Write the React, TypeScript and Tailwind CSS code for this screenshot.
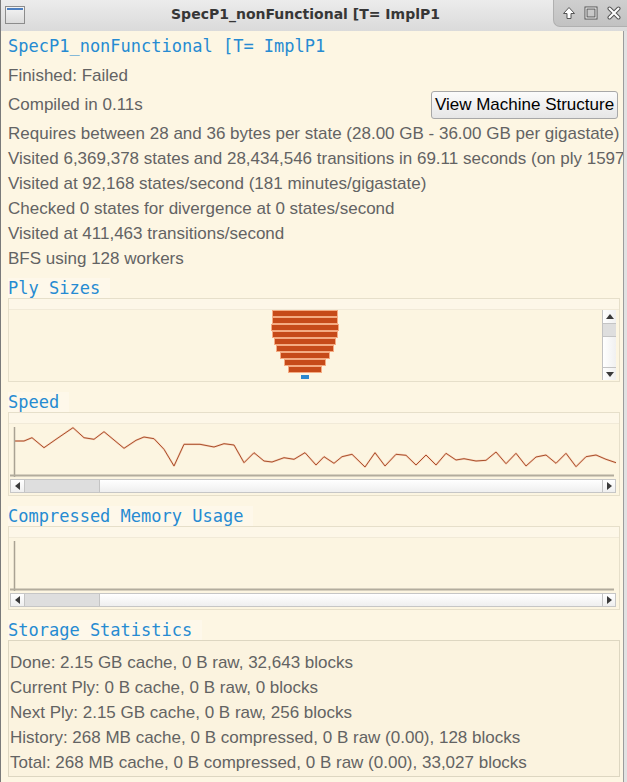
import React from "react";

const speedPts: [number, number][] = [
  [14, 440], [24, 440], [32, 436.7], [44, 446.7], [56, 438.3], [73, 426.7], [84, 436.7], [94, 438.3],
  [104, 430.7], [124, 447.3], [136, 439.3], [144, 436], [154, 437.7], [164, 448.3], [174, 465],
  [184, 443.3], [200, 443.3], [214, 446], [224, 442.7], [234, 444], [244, 461.7], [254, 451.7],
  [264, 460], [272, 461], [284, 456.7], [294, 458.3], [305, 451.7], [316, 464], [324, 455.7],
  [334, 462.3], [342, 455.7], [352, 453.3], [365, 466], [375, 451.7], [385, 465], [396, 453.3],
  [406, 454.3], [416, 464], [426, 454], [436, 464], [446, 452.3], [456, 459], [464, 457.7],
  [476, 460], [486, 459.3], [496, 451], [506, 462.7], [516, 452.3], [526, 465], [536, 456],
  [546, 454], [556, 462.3], [566, 452.3], [576, 465.7], [586, 455.7], [596, 454], [606, 458.3],
  [616, 461.7],
];

const bars: [number, number][] = [
  [273, 337], [273, 337], [272, 338], [273, 337], [275, 335], [277, 333], [281, 329], [285, 325], [289, 321],
];

function Label({ text }: { text: string }) {
  return (
    <div className="h-[20px] flex">
      <div className="h-[20px] pr-[10px] bg-[#fef8ea] text-[17px] leading-[20px] text-[#268bd2] font-['DejaVu_Sans_Mono',monospace] whitespace-nowrap">
        {text}
      </div>
    </div>
  );
}

function HScroll() {
  return (
    <div className="ml-[1px] mr-[3px] h-[14px] flex border border-[#c6c6c6] bg-gradient-to-b from-[#ffffff] to-[#efefef]">
      <div className="w-[13px] h-full flex items-center justify-center">
        <svg width="6" height="8" viewBox="0 0 6 8">
          <polygon points="5,0 5,8 0,4" fill="#3a3a3a" />
        </svg>
      </div>
      <div className="w-[76px] h-full bg-[#dedede] border-x border-[#c4c4c4]" />
      <div className="flex-1" />
      <div className="w-[13px] h-full flex items-center justify-center border-l border-[#c4c4c4]">
        <svg width="6" height="8" viewBox="0 0 6 8">
          <polygon points="1,0 1,8 6,4" fill="#3a3a3a" />
        </svg>
      </div>
    </div>
  );
}

function ChartBox({ line }: { line: boolean }) {
  const d = speedPts.map((p, i) => (i === 0 ? "M" : "L") + p[0] + " " + p[1]).join(" ");
  return (
    <div className="h-[84px] mr-[3px] border border-[#e6dfca] bg-[#fcf5e1] flex flex-col">
      <svg width="610" height="66" viewBox="9 412 610 66" className="block">
        <rect x="9" y="412" width="610" height="10" fill="#fdf7e8" />
        <line x1="9" y1="422.5" x2="619" y2="422.5" stroke="#f1ead8" strokeWidth="1" />
        {line && <path d={d} fill="none" stroke="#f0a584" strokeWidth="2" strokeOpacity="0.45" strokeLinejoin="round" />}
        {line && <path d={d} fill="none" stroke="#a9502c" strokeWidth="1" strokeLinejoin="round" />}
        <line x1="14.5" y1="426" x2="14.5" y2="476" stroke="#a9a293" strokeWidth="1.5" />
        <line x1="10" y1="474.5" x2="614" y2="474.5" stroke="#b2ac9d" strokeWidth="2" />
      </svg>
      <HScroll />
    </div>
  );
}

export default function App() {
  return (
    <div className="w-[627px] h-[782px] overflow-hidden flex flex-col bg-[#fdf6e3] font-['Liberation_Sans',Arial,sans-serif]">
      {/* Title bar */}
      <div className="h-[31px] flex items-stretch bg-gradient-to-b from-[#ececec] to-[#dadada] border-l border-[#7a7a7a]">
        <div className="w-[27px] flex items-start pt-[6px] pl-[4px]">
          <div className="w-[20px] h-[18px] border border-[#8c8c8c] bg-gradient-to-b from-[#f4f4f4] to-[#dcdcdc] flex flex-col">
            <div className="h-[2px] mt-[1px] mx-[1px] bg-[#4d7fc0]" />
          </div>
        </div>
        <div className="flex-1 flex items-center justify-center pl-[30px] pb-[2px] text-[14px] font-bold text-[#363636] font-['DejaVu_Sans',sans-serif] whitespace-nowrap">
          SpecP1_nonFunctional [T= ImplP1
        </div>
        <div className="w-[74px] h-[27px] rounded-bl-[7px] bg-gradient-to-b from-[#cfcfcf] to-[#c2c2c2] border-l border-b border-[#b0b0b0] flex items-center justify-around pl-[4px] pr-[2px]">
          <svg width="14" height="14" viewBox="0 0 14 14">
            <path d="M7 1.5 L12.5 7.5 L9 7.5 L9 12.5 L5 12.5 L5 7.5 L1.5 7.5 Z" fill="#ffffff" stroke="#555555" strokeWidth="1" strokeLinejoin="round" />
          </svg>
          <svg width="14" height="14" viewBox="0 0 14 14">
            <rect x="2" y="2" width="10" height="10" fill="none" stroke="#555555" strokeWidth="3" />
            <rect x="2" y="2" width="10" height="10" fill="none" stroke="#ffffff" strokeWidth="1" />
          </svg>
          <svg width="14" height="14" viewBox="0 0 14 14">
            <path d="M2.5 2.5 L11.5 11.5 M11.5 2.5 L2.5 11.5" stroke="#555555" strokeWidth="4" strokeLinecap="round" />
            <path d="M2.5 2.5 L11.5 11.5 M11.5 2.5 L2.5 11.5" stroke="#ffffff" strokeWidth="2" strokeLinecap="round" />
          </svg>
        </div>
      </div>

      <div className="flex-1 flex min-h-0">
        <div className="w-[623px] border-l border-[#7a7a7a] pl-[7px] flex flex-col overflow-hidden text-[#636363] text-[17px]">
          <div className="h-[32px] flex items-center text-[#268bd2] font-['DejaVu_Sans_Mono',monospace] whitespace-nowrap">
            SpecP1_nonFunctional [T= ImplP1
          </div>
          <div className="h-[25px] flex items-center whitespace-nowrap">Finished: Failed</div>
          <div className="h-[33px] flex items-center justify-between whitespace-nowrap pr-[5px]">
            <span>Compiled in 0.11s</span>
            <button className="h-[28px] w-[187px] rounded-[3px] border border-[#a8a8a8] bg-gradient-to-b from-[#fbfbfb] to-[#e6e6e6] text-black text-[17px] flex items-center justify-center">
              View Machine Structure
            </button>
          </div>
          <div className="h-[25px] flex items-center whitespace-nowrap">
            Requires between 28 and 36 bytes per state (28.00 GB - 36.00 GB per gigastate)
          </div>
          <div className="h-[25px] flex items-center whitespace-nowrap">
            Visited 6,369,378 states and 28,434,546 transitions in 69.11 seconds (on ply 1597)
          </div>
          <div className="h-[25px] flex items-center whitespace-nowrap">Visited at 92,168 states/second (181 minutes/gigastate)</div>
          <div className="h-[25px] flex items-center whitespace-nowrap">Checked 0 states for divergence at 0 states/second</div>
          <div className="h-[25px] flex items-center whitespace-nowrap">Visited at 411,463 transitions/second</div>
          <div className="h-[25px] flex items-center whitespace-nowrap">BFS using 128 workers</div>

          <div className="h-[7px]" />
          <Label text="Ply Sizes" />
          <div className="h-[84px] mr-[3px] border border-[#e6dfca] bg-[#fcf5e1] flex flex-col">
            <div className="h-[11px] bg-[#fdf7e8] border-b border-[#f1ead8]" />
            <div className="flex-1 flex">
              <svg width="593" height="71" viewBox="9 310 593 71" className="block">
                {bars.map(([a, b], i) => (
                  <g key={i}>
                    <rect x={a - 1} y={310 + 7 * i} width={b - a + 2} height={7} fill="#f4ab82" />
                    <rect x={a} y={311 + 7 * i} width={b - a} height={5} fill="#c64a19" />
                  </g>
                ))}
                <rect x="301" y="375" width="8" height="4" fill="#2a88cf" />
              </svg>
              <div className="w-[14px] h-[70px] flex flex-col border-l border-[#c2c2c2] bg-gradient-to-r from-[#ffffff] to-[#f0f0f0]">
                <div className="h-[13px] flex items-center justify-center">
                  <svg width="8" height="6" viewBox="0 0 8 6"><polygon points="0,5 8,5 4,0" fill="#3a3a3a" /></svg>
                </div>
                <div className="h-[14px] bg-[#dedede] border-y border-[#c4c4c4]" />
                <div className="flex-1" />
                <div className="h-[13px] flex items-center justify-center border-t border-[#c4c4c4]">
                  <svg width="8" height="6" viewBox="0 0 8 6"><polygon points="0,1 8,1 4,6" fill="#3a3a3a" /></svg>
                </div>
              </div>
              <div className="w-[3px]" />
            </div>
          </div>

          <div className="h-[10px]" />
          <Label text="Speed" />
          <ChartBox line={true} />

          <div className="h-[10px]" />
          <Label text="Compressed Memory Usage" />
          <ChartBox line={false} />

          <div className="h-[10px]" />
          <Label text="Storage Statistics" />
          <div className="h-[137px] mr-[3px] border border-[#ddd6c1] bg-[#fbf3df] flex flex-col pt-[9px] pl-[1px] whitespace-nowrap">
            <div className="h-[25px] flex items-center">Done: 2.15 GB cache, 0 B raw, 32,643 blocks</div>
            <div className="h-[25px] flex items-center">Current Ply: 0 B cache, 0 B raw, 0 blocks</div>
            <div className="h-[25px] flex items-center">Next Ply: 2.15 GB cache, 0 B raw, 256 blocks</div>
            <div className="h-[25px] flex items-center">History: 268 MB cache, 0 B compressed, 0 B raw (0.00), 128 blocks</div>
            <div className="h-[25px] flex items-center">Total: 268 MB cache, 0 B compressed, 0 B raw (0.00), 33,027 blocks</div>
          </div>
        </div>
        <div className="w-[1px] bg-[#9c9c9c]" />
        <div className="w-[3px] bg-[#e2e2e2]" />
      </div>
    </div>
  );
}
